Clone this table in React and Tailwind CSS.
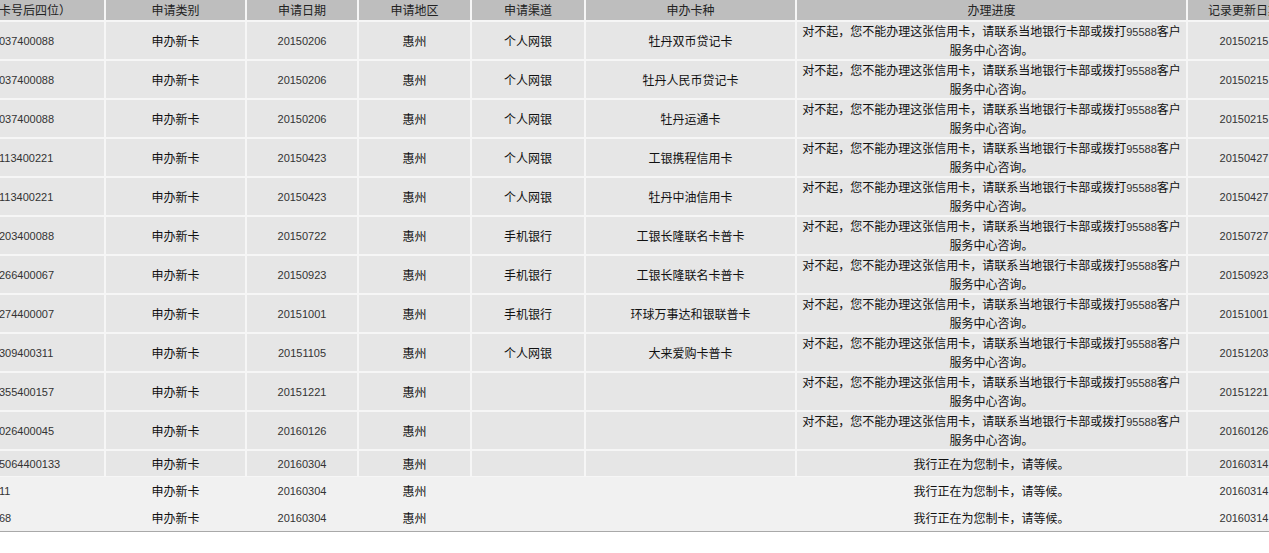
import React from "react";

const digit = "font-['Liberation_Sans',sans-serif] text-[11px] text-[#333]";

const W1 = ["w-[104px]", "w-[139px]", "w-[110px]", "w-[111px]", "w-[112px]", "w-[209px]", "w-[389px]", "w-[112px]"];
const W2 = ["w-[105px]", "w-[141px]", "w-[112px]", "w-[113px]", "w-[114px]", "w-[211px]", "w-[391px]", "w-[114px]"];

const headers = ["卡号后四位）", "申请类别", "申请日期", "申请地区", "申请渠道", "申办卡种", "办理进度", "记录更新日期"];

const sorry = (
  <>
    对不起，您不能办理这张信用卡，请联系当地银行卡部或拨打<span className={digit}>95588</span>客户
    <br />
    服务中心咨询。
  </>
);
const making = <>我行正在为您制卡，请等候。</>;

const rows = [
  ["037400088", "20150206", "个人网银", "牡丹双币贷记卡", sorry, "20150215"],
  ["037400088", "20150206", "个人网银", "牡丹人民币贷记卡", sorry, "20150215"],
  ["037400088", "20150206", "个人网银", "牡丹运通卡", sorry, "20150215"],
  ["113400221", "20150423", "个人网银", "工银携程信用卡", sorry, "20150427"],
  ["113400221", "20150423", "个人网银", "牡丹中油信用卡", sorry, "20150427"],
  ["203400088", "20150722", "手机银行", "工银长隆联名卡普卡", sorry, "20150727"],
  ["266400067", "20150923", "手机银行", "工银长隆联名卡普卡", sorry, "20150923"],
  ["274400007", "20151001", "手机银行", "环球万事达和银联普卡", sorry, "20151001"],
  ["309400311", "20151105", "个人网银", "大来爱购卡普卡", sorry, "20151203"],
  ["355400157", "20151221", "", "", sorry, "20151221"],
  ["026400045", "20160126", "", "", sorry, "20160126"],
  ["5064400133", "20160304", "", "", making, "20160314"],
];

const tail = [
  ["11", "20160304", "", "", making, "20160314"],
  ["68", "20160304", "", "", making, "20160314"],
];

function Cells({ r }) {
  return (
    <>
      <td className="p-0 text-left whitespace-nowrap overflow-hidden">
        <span className={`${digit} inline-block -ml-[1px]`}>{r[0]}</span>
      </td>
      <td className="p-0 text-center">申办新卡</td>
      <td className="p-0 text-center">
        <span className={digit}>{r[1]}</span>
      </td>
      <td className="p-0 text-center">惠州</td>
      <td className="p-0 text-center">{r[2]}</td>
      <td className="p-0 text-center">{r[3]}</td>
      <td className="p-0 text-center">{r[4]}</td>
      <td className="p-0 text-center">
        <span className={digit}>{r[5]}</span>
      </td>
    </>
  );
}

export default function App() {
  return (
    <div className="w-[1269px] h-[553px] overflow-hidden bg-white font-['Noto_Sans_CJK_SC',sans-serif] text-[12px] leading-[18px] text-[#111]">
      <table className="-ml-[2px] -mt-[2px] w-[1304px] table-fixed border-separate border-spacing-[2px] bg-[#f6f6f6]">
        <thead>
          <tr>
            {headers.map((h, i) => (
              <th
                key={i}
                className={`${W1[i]} h-[20px] p-0 bg-[#bebebe] font-normal leading-[20px] text-[#222] whitespace-nowrap overflow-hidden ${
                  i === 0 ? "text-left" : "text-center"
                }`}
              >
                {i === 0 ? <span className="inline-block -ml-[1px]">{h}</span> : h}
              </th>
            ))}
          </tr>
        </thead>
        <tbody>
          {rows.map((r, i) => (
            <tr key={i} className={`bg-[#e6e6e6] ${i < 11 ? "h-[37px]" : "h-[25px]"}`}>
              <Cells r={r} />
            </tr>
          ))}
        </tbody>
      </table>
      <div className="-mt-[1px] w-[1301px] border-b border-[#a9a9a9] bg-[#f1f1f1]">
        <table className="w-[1301px] table-fixed border-collapse">
          <colgroup>
            {W2.map((w, i) => (
              <col key={i} className={w} />
            ))}
          </colgroup>
          <tbody>
            {tail.map((r, i) => (
              <tr key={i} className="h-[27px]">
                <Cells r={r} />
              </tr>
            ))}
          </tbody>
        </table>
      </div>
    </div>
  );
}
